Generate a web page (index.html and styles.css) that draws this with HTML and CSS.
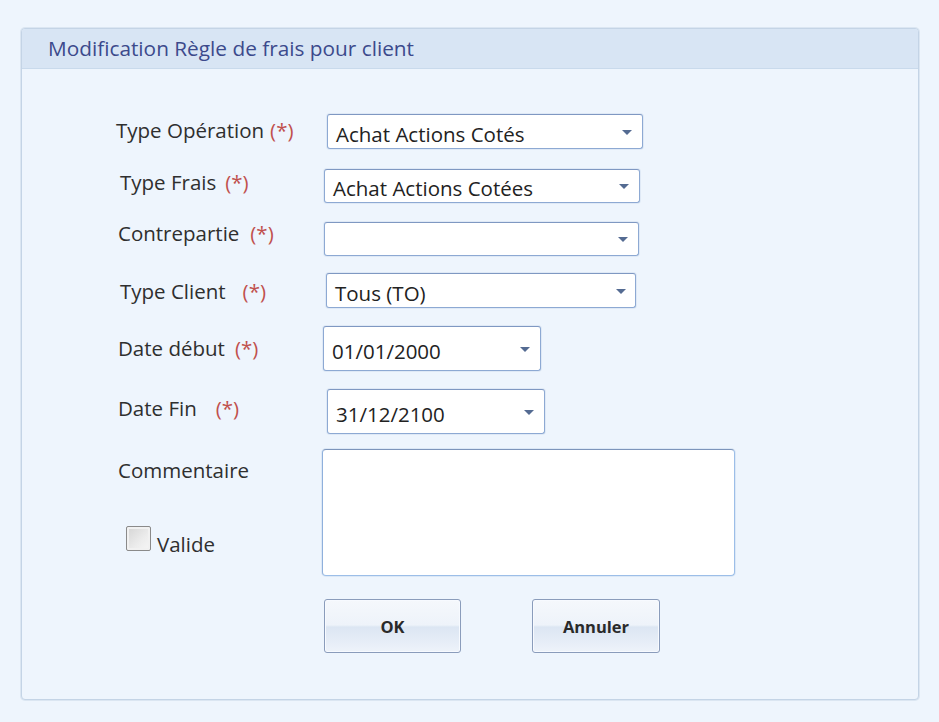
FILE: index.html
```html
<!DOCTYPE html>
<html lang="fr">
<head>
<meta charset="utf-8">
<title>Modification Règle de frais pour client</title>
<link rel="stylesheet" href="styles.css">
</head>
<body>
<div class="panel">
  <div class="panel-head">Modification Règle de frais pour client</div>
  <form class="panel-body">
    <div class="row row-1">
      <label class="lbl">Type Opération<span class="req gap-1">(*)</span></label>
      <div class="combo combo-wide">
        <span class="combo-text">Achat Actions Cotés</span>
        <span class="caret"></span>
      </div>
    </div>
    <div class="row row-2">
      <label class="lbl">Type Frais<span class="req gap-2">(*)</span></label>
      <div class="combo combo-wide">
        <span class="combo-text">Achat Actions Cotées</span>
        <span class="caret"></span>
      </div>
    </div>
    <div class="row row-3">
      <label class="lbl">Contrepartie<span class="req gap-3">(*)</span></label>
      <div class="combo combo-mid">
        <span class="combo-text"></span>
        <span class="caret"></span>
      </div>
    </div>
    <div class="row row-4">
      <label class="lbl">Type Client<span class="req gap-4">(*)</span></label>
      <div class="combo combo-client">
        <span class="combo-text">Tous (TO)</span>
        <span class="caret"></span>
      </div>
    </div>
    <div class="row row-5">
      <label class="lbl">Date début<span class="req gap-5">(*)</span></label>
      <div class="combo combo-date">
        <span class="combo-text">01/01/2000</span>
        <span class="caret"></span>
      </div>
    </div>
    <div class="row row-6">
      <label class="lbl">Date Fin<span class="req gap-6">(*)</span></label>
      <div class="combo combo-date">
        <span class="combo-text">31/12/2100</span>
        <span class="caret"></span>
      </div>
    </div>
    <div class="row row-7">
      <div class="lbl lbl-stack">
        <span class="lbl-comment">Commentaire</span>
        <span class="check-line">
          <span class="checkbox"></span>
          <span class="check-text">Valide</span>
        </span>
      </div>
      <div class="memo"></div>
    </div>
    <div class="row row-8">
      <div class="lbl"></div>
      <button type="button" class="btn btn-ok">OK</button>
      <button type="button" class="btn btn-cancel">Annuler</button>
    </div>
  </form>
</div>
</body>
</html>
```

FILE: styles.css
```css
html, body {
  margin: 0;
  padding: 0;
}

body {
  background: #eef5fd;
  font-family: "Open Sans", "Noto Sans", sans-serif;
  color: #2b2b2b;
  width: 939px;
  height: 722px;
  overflow: hidden;
  padding-top: 28px;
  box-sizing: border-box;
}

/* dialog frame */
.panel {
  margin-left: 21px;
  width: 898px;
  height: 672px;
  box-sizing: border-box;
  border: 1px solid #c4d4e6;
  box-shadow: 0 0 0 1px #dbe6f2;
  border-radius: 4px;
  background: #eef5fd;
  overflow: hidden;
}

.panel-head {
  height: 39px;
  border-bottom: 1px solid #c9daec;
  background: #d8e5f4;
  color: #3c4a8c;
  font-size: 20.8px;
  line-height: 39px;
  padding-left: 26px;
  white-space: nowrap;
}

.panel-body {
  margin: 0;
}

/* form rows */
.row {
  display: flex;
  align-items: flex-start;
}

.lbl {
  width: 300px;
  flex: none;
  box-sizing: border-box;
  font-size: 20.5px;
  line-height: 24px;
  color: #2f2f2f;
  white-space: nowrap;
}

.req {
  color: #c0504d;
}

.row-1 { margin-top: 45px; }
.row-1 .lbl { padding-left: 94px; margin-top: 4px; }
.row-1 .combo { margin-left: 5px; }
.gap-1 { margin-left: 6px; }

.row-2 { margin-top: 20px; }
.row-2 .lbl { padding-left: 98px; margin-top: 1px; }
.row-2 .combo { margin-left: 2px; height: 34px; }
.gap-2 { margin-left: 9px; }

.row-3 { margin-top: 19px; }
.row-3 .lbl { padding-left: 96px; margin-top: -1px; }
.row-3 .combo { margin-left: 2px; height: 34px; }
.gap-3 { margin-left: 11px; }

.row-4 { margin-top: 17px; }
.row-4 .lbl { padding-left: 98px; margin-top: 6px; }
.row-4 .combo { margin-left: 4px; }
.gap-4 { margin-left: 17px; }

.row-5 { margin-top: 18px; }
.row-5 .lbl { padding-left: 96px; margin-top: 10px; }
.row-5 .combo { margin-left: 1px; }
.gap-5 { margin-left: 10px; }

.row-6 { margin-top: 18px; }
.row-6 .lbl { padding-left: 96px; margin-top: 7px; }
.row-6 .combo { margin-left: 5px; }
.gap-6 { margin-left: 19px; }

.row-7 { margin-top: 15px; }
.row-8 { margin-top: 23px; }

/* combo boxes */
.combo {
  position: relative;
  box-sizing: border-box;
  height: 35px;
  border: 1px solid #8da9d3;
  border-top-color: #7f98c2;
  border-radius: 3px;
  background: #ffffff;
  box-shadow: 0 0 0 1px #dfe9f6;
  display: flex;
  align-items: center;
  padding-left: 8px;
  padding-top: 4px;
  font-size: 20.5px;
  color: #222222;
}

.combo-wide { width: 316px; }
.combo-mid { width: 315px; }
.combo-client { width: 310px; }
.combo-date { width: 218px; height: 45px; }

.combo-text {
  flex: 1;
  white-space: nowrap;
}

.caret {
  position: absolute;
  right: 10px;
  top: 50%;
  margin-top: -2px;
  width: 0;
  height: 0;
  border-left: 5px solid transparent;
  border-right: 5px solid transparent;
  border-top: 5px solid #546b92;
}

.combo-client .caret { right: 9px; }
.combo-date .caret { right: 10px; }

/* comment area */
.lbl-stack {
  display: flex;
  flex-direction: column;
  padding-left: 96px;
  padding-top: 9px;
}

.check-line {
  display: flex;
  align-items: flex-end;
  margin-top: 44px;
  margin-left: 8px;
}

.checkbox {
  width: 23px;
  height: 23px;
  border: 1px solid #8a8a8a;
  border-radius: 2px;
  background: linear-gradient(135deg, #d4d4d4 0%, #ececec 60%, #f6f6f6 100%);
  box-shadow: inset 0 0 0 2px #f1f1f1;
}

.check-text {
  margin-left: 6px;
  margin-bottom: -5px;
}

.memo {
  width: 413px;
  height: 127px;
  box-sizing: border-box;
  background: #ffffff;
  border: 1px solid #9cbee8;
  border-top-color: #7d95bb;
  border-left-color: #8fb0dc;
  border-radius: 4px;
  box-shadow: 0 0 0 1px #dce8f6;
}

/* buttons */
.btn {
  box-sizing: border-box;
  height: 54px;
  margin: 0;
  padding: 0;
  border: 1px solid #8a9cbb;
  border-radius: 3px;
  box-shadow: inset 0 0 0 1px #f7faff;
  background: linear-gradient(to bottom, #f5f8fc 0%, #eef3fa 48%, #dce6f3 52%, #e6edf7 80%, #eef3fa 100%);
  font-family: "Open Sans", "Noto Sans", sans-serif;
  font-size: 16.5px;
  font-weight: 700;
  color: #2a2a2a;
  cursor: pointer;
}

.btn-ok {
  width: 137px;
  margin-left: 2px;
}

.btn-cancel {
  width: 128px;
  margin-left: 71px;
}
```
